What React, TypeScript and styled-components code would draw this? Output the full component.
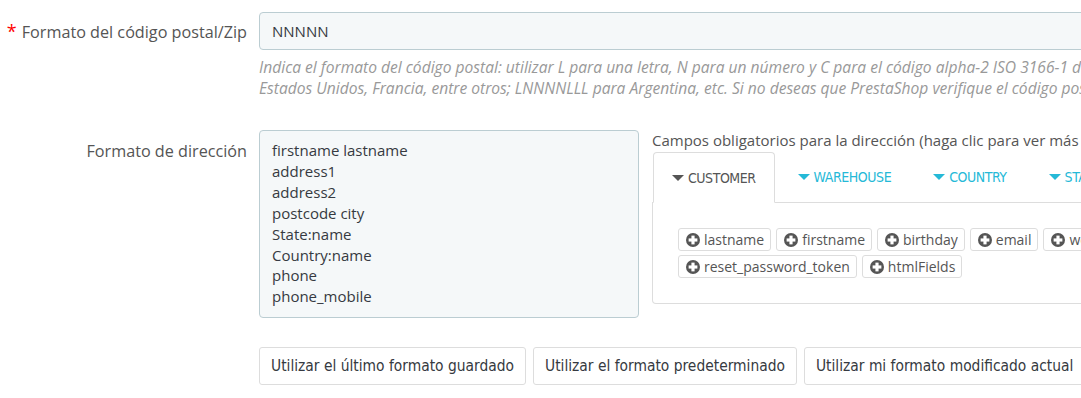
import styled, { createGlobalStyle } from "styled-components";

const Global = createGlobalStyle`
  html, body {
    margin: 0;
    padding: 0;
    background: #fff;
    overflow: hidden;
  }
  body {
    font-family: "Open Sans", "Liberation Sans", sans-serif;
    color: #555;
  }
`;

const condensed = `"DejaVu Sans", "Liberation Sans", sans-serif`;

const Form = styled.div`
  width: 1400px;
  padding-top: 12px;
`;

const Row = styled.div<{ $gap?: number }>`
  display: grid;
  grid-template-columns: 247px 1fr;
  column-gap: 12px;
  margin-bottom: ${(p) => p.$gap ?? 0}px;
`;

const Label = styled.label<{ $top?: number }>`
  text-align: right;
  font-size: 16.2px;
  line-height: 20px;
  padding-top: ${(p) => p.$top ?? 9}px;
  color: #555;
  white-space: nowrap;
`;

const Required = styled.span`
  color: #f00;
  margin-right: 5px;
  font-size: 18px;
`;

const Input = styled.div`
  box-sizing: border-box;
  height: 38px;
  padding: 0 12px;
  display: flex;
  align-items: center;
  background: #f5f8f9;
  border: 1px solid #bbcdd2;
  border-radius: 4px;
  font-size: 15px;
  color: #363a41;
`;

const Help = styled.p`
  margin: 7px 0 0;
  font-size: 15.6px;
  line-height: 21px;
  font-style: italic;
  color: #999;
  white-space: nowrap;
`;

const AddressField = styled.div`
  display: flex;
  gap: 13px;
  align-items: flex-start;
`;

const TextArea = styled.div`
  box-sizing: border-box;
  width: 380px;
  height: 188px;
  padding: 9px 12px;
  background: #f5f8f9;
  border: 1px solid #bbcdd2;
  border-radius: 4px;
  font-size: 15px;
  line-height: 20.9px;
  color: #363a41;
`;

const Side = styled.div`
  flex: 1;
`;

const SideTitle = styled.div`
  font-size: 15px;
  line-height: 20px;
  margin: 0 0 2px;
  white-space: nowrap;
`;

const Tabs = styled.ul`
  display: flex;
  list-style: none;
  margin: 0;
  padding: 0 0 0 1px;
  border-bottom: 1px solid #ddd;
`;

const Tab = styled.li<{ $active?: boolean }>`
  box-sizing: border-box;
  height: ${(p) => (p.$active ? 51 : 50)}px;
  margin-bottom: ${(p) => (p.$active ? -1 : 0)}px;
  margin-right: 4px;
  padding: 0 18px;
  display: flex;
  align-items: center;
  gap: 2px;
  font-family: ${condensed};
  font-stretch: condensed;
  font-size: 14px;
  letter-spacing: -0.45px;
  text-transform: uppercase;
  color: ${(p) => (p.$active ? "#555" : "#25b9d7")};
  background: #fff;
  border: 1px solid ${(p) => (p.$active ? "#ddd" : "transparent")};
  border-bottom-color: ${(p) => (p.$active ? "#fff" : "transparent")};
  border-radius: 4px 4px 0 0;
  white-space: nowrap;
`;

const Caret = styled.span`
  display: inline-block;
  width: 0;
  height: 0;
  border-left: 6px solid transparent;
  border-right: 6px solid transparent;
  border-top: 6px solid currentColor;
  margin-right: 2px;
`;

const TabPanel = styled.div`
  box-sizing: border-box;
  height: 101px;
  padding: 25px;
  border: 1px solid #ddd;
  border-top: none;
  border-radius: 0 0 4px 4px;
  display: flex;
  flex-wrap: wrap;
  align-content: flex-start;
  gap: 2px 5px;
  width: 800px;
`;

const Chip = styled.span`
  box-sizing: border-box;
  height: 23px;
  padding: 0 6px 0 7px;
  display: inline-flex;
  align-items: center;
  gap: 4px;
  border: 1px solid #ddd;
  border-radius: 3px;
  font-size: 14px;
  color: #555;
  white-space: nowrap;
`;

const Break = styled.div`
  flex-basis: 100%;
  height: 0;
`;

const Buttons = styled.div`
  display: flex;
  gap: 7px;
  margin-top: 29px;
`;

const Button = styled.button`
  box-sizing: border-box;
  height: 38px;
  padding: 0 11px;
  background: #fff;
  border: 1px solid #ddd;
  border-radius: 3px;
  font-family: ${condensed};
  font-stretch: condensed;
  font-size: 15.4px;
  color: #363a41;
  white-space: nowrap;
`;

const PlusIcon = () => (
  <svg width="14" height="14" viewBox="0 0 16 16">
    <circle cx="8" cy="8" r="8" fill="#555" />
    <rect x="3" y="6.2" width="10" height="3.6" fill="#fff" />
    <rect x="6.2" y="3" width="3.6" height="10" fill="#fff" />
  </svg>
);

const addressLines = [
  "firstname lastname",
  "address1",
  "address2",
  "postcode city",
  "State:name",
  "Country:name",
  "phone",
  "phone_mobile",
];

const tabs = ["Customer", "Warehouse", "Country", "State", "Address"];

const firstRow = ["lastname", "firstname", "birthday", "email", "website", "company"];
const secondRow = ["reset_password_token", "htmlFields"];

export default function App() {
  return (
    <>
      <Global />
      <Form>
        <Row $gap={31}>
          <Label>
            <Required>*</Required>Formato del código postal/Zip
          </Label>
          <div>
            <Input>NNNNN</Input>
            <Help>
              Indica el formato del código postal: utilizar L para una letra, N para un número y C
              para el código alpha-2 ISO 3166-1 de país. Por ejemplo: NNNNN para España,
              <br />
              Estados Unidos, Francia, entre otros; LNNNNLLL para Argentina, etc. Si no deseas que
              PrestaShop verifique el código postal, déjalo en blanco.
            </Help>
          </div>
        </Row>
        <Row>
          <Label $top={11}>Formato de dirección</Label>
          <div>
            <AddressField>
              <TextArea>
                {addressLines.map((l) => (
                  <div key={l}>{l}</div>
                ))}
              </TextArea>
              <Side>
                <SideTitle>
                  Campos obligatorios para la dirección (haga clic para ver más detalles):
                </SideTitle>
                <Tabs>
                  {tabs.map((t, i) => (
                    <Tab key={t} $active={i === 0}>
                      <Caret />
                      {t}
                    </Tab>
                  ))}
                </Tabs>
                <TabPanel>
                  {firstRow.map((f) => (
                    <Chip key={f}>
                      <PlusIcon />
                      {f}
                    </Chip>
                  ))}
                  <Break />
                  {secondRow.map((f) => (
                    <Chip key={f}>
                      <PlusIcon />
                      {f}
                    </Chip>
                  ))}
                </TabPanel>
              </Side>
            </AddressField>
            <Buttons>
              <Button>Utilizar el último formato guardado</Button>
              <Button>Utilizar el formato predeterminado</Button>
              <Button>Utilizar mi formato modificado actual</Button>
              <Button>Borrar formato</Button>
            </Buttons>
          </div>
        </Row>
      </Form>
    </>
  );
}
